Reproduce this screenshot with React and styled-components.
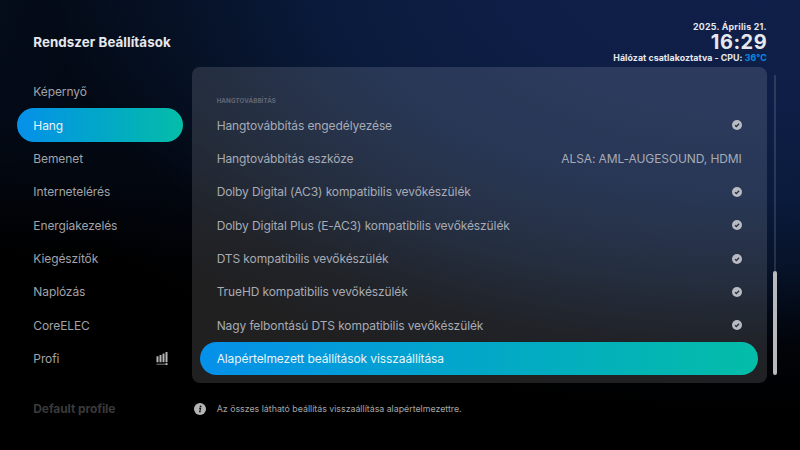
import React from "react";
import styled, { createGlobalStyle, css } from "styled-components";

const GlobalStyle = createGlobalStyle`
  * { box-sizing: border-box; }
  body { margin: 0; background: #000; }
`;

const accent = css`
  background: linear-gradient(90deg, #0590ea 0%, #02a5cb 45%, #04bda8 100%);
  color: #e6f4f8;
`;

const Screen = styled.main`
  width: 800px;
  height: 450px;
  overflow: hidden;
  display: grid;
  grid-template-rows: 66.67px 316.67px 1fr;
  font-family: Inter, sans-serif;
  font-size: 12px;
  letter-spacing: -0.1px;
  font-optical-sizing: none;
  color: #a0a3a9;
  background:
    radial-gradient(ellipse 830px 430px at 750px -20px, #101f49 0%, #0e1e46 28%, #0a1b3d 50%, #061227 68%, rgba(2, 6, 15, 0.6) 85%, transparent 100%),
    radial-gradient(ellipse 760px 290px at 160px -30px, #081528 0%, #040b18 55%, transparent 100%),
    #000;
`;

const Header = styled.header`
  display: flex;
  justify-content: space-between;
  padding: 21px 33.3px 0;
  color: #e6e8ed;
`;

const Title = styled.h1`
  margin: 12px 0 0;
  font-size: 13.35px;
  line-height: 18px;
  font-weight: 700;
  letter-spacing: 0.06px;
  white-space: nowrap;
`;

const Status = styled.div`
  display: flex;
  flex-direction: column;
  align-items: flex-end;
  font-weight: 700;
  font-size: 8.8px;
  letter-spacing: 0.05px;
  line-height: 11px;
  white-space: nowrap;
`;

const StatusDate = styled.span`
  letter-spacing: 0.25px;
`;

const Clock = styled.time`
  font-size: 20px;
  font-weight: 700;
  line-height: 20px;
  letter-spacing: 0.5px;
  margin-right: -0.5px;
`;

const Temperature = styled.span`
  color: #078be0;
`;

const Body = styled.div`
  display: grid;
  grid-template-columns: 166.67px 575px 4px;
  column-gap: 8.33px;
  padding-left: 16.67px;
`;

const Nav = styled.nav`
  padding-top: 8.33px;
`;

const NavItem = styled.div`
  height: 33.333px;
  padding: 0.6px 15px 0 16.67px;
  display: flex;
  align-items: center;
  justify-content: space-between;
  border-radius: 17px;
  ${(p) => p.$active && accent}
`;

const Panel = styled.section`
  padding: 25px 8.33px 8.33px;
  border-radius: 8px;
  background: rgba(255, 255, 255, 0.125);
`;

const GroupLabel = styled.h2`
  margin: 0;
  height: 16.67px;
  padding-left: 16.67px;
  font-size: 6.2px;
  line-height: 17px;
  font-weight: 700;
  letter-spacing: 0.12px;
  color: #606778;
`;

const Setting = styled.div`
  height: 33.333px;
  padding: 0.6px 16.67px 0;
  display: flex;
  align-items: center;
  justify-content: space-between;
  border-radius: 17px;
  white-space: nowrap;
  color: #a7abb5;
  ${(p) => p.$active && accent}
`;

const ScrollTrack = styled.div`
  width: 4px;
  height: 300px;
  margin: 8.33px 0 0 -2px;
  display: flex;
  flex-direction: column;
  align-items: center;
`;

const TrackLine = styled.div`
  flex: 1;
  width: 2px;
  background: rgba(255, 255, 255, 0.13);
`;

const ScrollThumb = styled.div`
  width: 4px;
  height: 104px;
  border-radius: 2px;
  background: #b8b9bc;
`;

const Footer = styled.footer`
  display: grid;
  grid-template-columns: 160.5px 23px 1fr;
  align-items: center;
  height: 50px;
  padding: 1px 0 0 33.3px;
`;

const Profile = styled.span`
  font-weight: 700;
  color: #3a3a3a;
`;

const Hint = styled.span`
  font-size: 8.8px;
  letter-spacing: 0;
  color: #a5a5a5;
`;

const Icon = styled.svg`
  display: block;
  flex: none;
`;

const CheckIcon = () => (
  <Icon width="10" height="10" viewBox="0 0 10 10">
    <circle cx="5" cy="5" r="5" fill="#b9bbc2" />
    <path d="M3 5.2 4.4 6.5 7.1 3.8" fill="none" stroke="#273146" strokeWidth="1.3" />
  </Icon>
);

const InfoIcon = () => (
  <Icon width="12" height="12" viewBox="0 0 12 12">
    <circle cx="6" cy="6" r="6" fill="#b4b4b4" />
    <circle cx="6.6" cy="3.4" r="0.9" fill="#111" />
    <path d="M5 5.2H6.6L5.7 8.6H6.7" fill="none" stroke="#111" strokeWidth="1.1" />
  </Icon>
);

const LevelIcon = () => (
  <Icon width="12" height="15" viewBox="0 0 12 15" fill="#b4b4b4">
    <rect x="0.5" y="5.3" width="2" height="6" rx="0.3" />
    <rect x="3.5" y="4" width="2" height="7.3" rx="0.3" />
    <rect x="6.5" y="2.6" width="2" height="8.7" rx="0.3" />
    <rect x="9.5" y="1" width="2" height="10.3" rx="0.3" />
    <rect x="0.5" y="12.8" width="11" height="0.7" />
    <circle cx="10.5" cy="13.1" r="1.1" />
  </Icon>
);

const categories = [
  "Képernyő", "Hang", "Bemenet", "Internetelérés", "Energiakezelés",
  "Kiegészítők", "Naplózás", "CoreELEC",
];

const settings = [
  { label: "Hangtovábbítás engedélyezése" },
  { label: "Hangtovábbítás eszköze", value: "ALSA: AML-AUGESOUND, HDMI" },
  { label: "Dolby Digital (AC3) kompatibilis vevőkészülék" },
  { label: "Dolby Digital Plus (E-AC3) kompatibilis vevőkészülék" },
  { label: "DTS kompatibilis vevőkészülék" },
  { label: "TrueHD kompatibilis vevőkészülék" },
  { label: "Nagy felbontású DTS kompatibilis vevőkészülék" },
];

export default function App() {
  return (
    <>
      <GlobalStyle />
      <Screen>
        <Header>
          <Title>Rendszer Beállítások</Title>
          <Status>
            <StatusDate>2025. Április 21.</StatusDate>
            <Clock>16:29</Clock>
            <span>Hálózat csatlakoztatva - CPU: <Temperature>36°C</Temperature></span>
          </Status>
        </Header>
        <Body>
          <Nav>
            {categories.map((name) => (
              <NavItem key={name} $active={name === "Hang"}>{name}</NavItem>
            ))}
            <NavItem>
              <span>Profi</span>
              <LevelIcon />
            </NavItem>
          </Nav>
          <Panel>
            <GroupLabel>HANGTOVÁBBÍTÁS</GroupLabel>
            {settings.map(({ label, value }) => (
              <Setting key={label}>
                <span>{label}</span>
                {value ? <span>{value}</span> : <CheckIcon />}
              </Setting>
            ))}
            <Setting $active>Alapértelmezett beállítások visszaállítása</Setting>
          </Panel>
          <ScrollTrack>
            <TrackLine />
            <ScrollThumb />
          </ScrollTrack>
        </Body>
        <Footer>
          <Profile>Default profile</Profile>
          <InfoIcon />
          <Hint>Az összes látható beállítás visszaállítása alapértelmezettre.</Hint>
        </Footer>
      </Screen>
    </>
  );
}
